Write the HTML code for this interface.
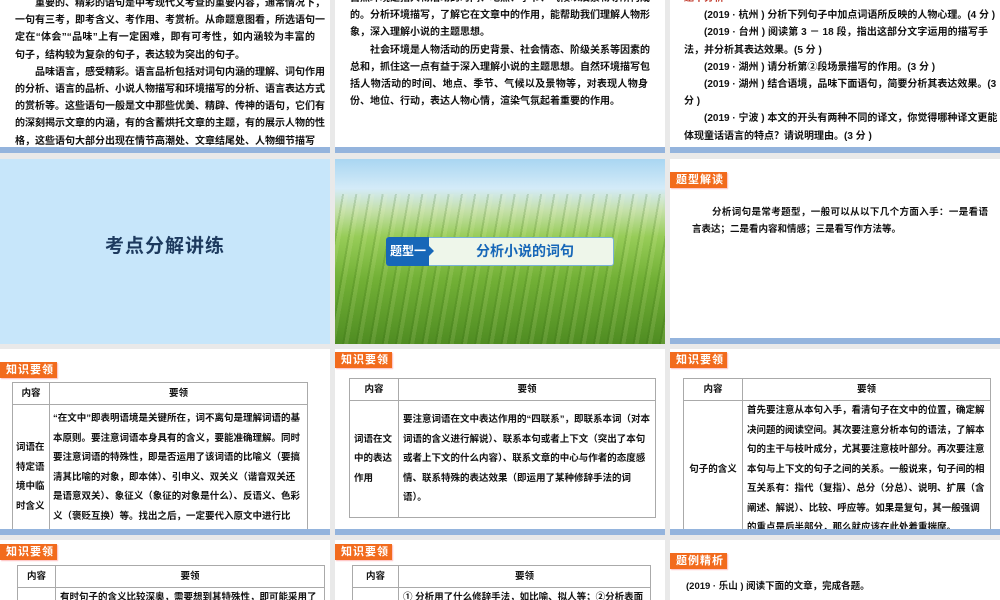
<!DOCTYPE html>
<html><head><meta charset="utf-8"><style>
*{margin:0;padding:0;box-sizing:border-box}
body{width:1000px;height:600px;background:#e9e9e9;position:relative;overflow:hidden;font-family:"Liberation Sans","Noto Sans CJK SC",sans-serif;color:#111}
.s{position:absolute;background:#fff;overflow:hidden}
.bar{position:absolute;left:0;right:0;bottom:0;height:6px;background:#94b4dd}
.t{position:absolute;font-size:10px;font-weight:bold;line-height:17.2px;letter-spacing:0}
.t div{white-space:nowrap;height:17.2px}
.t .j{text-align:justify;text-align-last:justify}
.t .i{padding-left:20px}
.lab{position:absolute;left:0;width:57px;height:16px;background:#f26b1d;color:#fff;font-size:11px;font-weight:bold;line-height:16px;padding-left:6px;letter-spacing:1px;box-shadow:1px 1px 1px #fbb}
table{position:absolute;border-collapse:collapse;font-size:9.5px;font-weight:bold;line-height:19.5px}
td{border:1px solid #aaa;vertical-align:middle;padding:0 4px}
th{border:1px solid #aaa;font-weight:bold;height:22px;text-align:center}
</style></head><body>

<!-- Row 1 -->
<div class="s" style="left:0;top:0;width:330px;height:153px">
 <div class="t" style="left:15px;top:-5px;width:300px">
  <div class="j i">重要的、精彩的语句是中考现代文考查的重要内容，通常情况下，</div>
  <div class="j">一句有三考，即考含义、考作用、考赏析。从命题意图看，所选语句一</div>
  <div class="j">定在“体会”“品味”上有一定困难，即有可考性，如内涵较为丰富的</div>
  <div>句子，结构较为复杂的句子，表达较为突出的句子。</div>
  <div class="j i">品味语言，感受精彩。语言品析包括对词句内涵的理解、词句作用</div>
  <div class="j">的分析、语言的品析、小说人物描写和环境描写的分析、语言表达方式</div>
  <div class="j">的赏析等。这些语句一般是文中那些优美、精辟、传神的语句，它们有</div>
  <div class="j">的深刻揭示文章的内涵，有的含蓄烘托文章的主题，有的展示人物的性</div>
  <div class="j">格，这些语句大部分出现在情节高潮处、文章结尾处、人物细节描写</div>
 </div>
 <div class="bar"></div>
</div>
<div class="s" style="left:335px;top:0;width:330px;height:153px">
 <div class="t" style="left:15px;top:-10px;width:298px">
  <div class="j">自然环境是指人物活动的时间、地点、季节、气候以及景物等所构成</div>
  <div class="j">的。分析环境描写，了解它在文章中的作用，能帮助我们理解人物形</div>
  <div>象，深入理解小说的主题思想。</div>
  <div class="j i">社会环境是人物活动的历史背景、社会情态、阶级关系等因素的</div>
  <div class="j">总和，抓住这一点有益于深入理解小说的主题思想。自然环境描写包</div>
  <div class="j">括人物活动的时间、地点、季节、气候以及景物等，对表现人物身</div>
  <div>份、地位、行动，表达人物心情，渲染气氛起着重要的作用。</div>
 </div>
 <div class="bar"></div>
</div>
<div class="s" style="left:670px;top:0;width:330px;height:153px">
 <div class="t" style="left:14px;top:-10px;width:304px">
  <div style="color:#c0392b">题干分析</div>
  <div class="j i">(2019 · 杭州 ) 分析下列句子中加点词语所反映的人物心理。(4 分 )</div>
  <div class="j i">(2019 · 台州 ) 阅读第 3 － 18 段，指出这部分文字运用的描写手</div>
  <div>法，并分析其表达效果。(5 分 )</div>
  <div class="i">(2019 · 湖州 ) 请分析第②段场景描写的作用。(3 分 )</div>
  <div class="j i">(2019 · 湖州 ) 结合语境，品味下面语句，简要分析其表达效果。(3</div>
  <div>分 )</div>
  <div class="j i">(2019 · 宁波 ) 本文的开头有两种不同的译文，你觉得哪种译文更能</div>
  <div>体现童话语言的特点？请说明理由。(3 分 )</div>
 </div>
 <div class="bar"></div>
</div>

<!-- Row 2 -->
<div class="s" style="left:0;top:159px;width:330px;height:185px;background:#c7e6fa">
 <div style="position:absolute;left:0;right:0;top:72px;text-align:center;font-size:19px;font-weight:bold;color:#1d3a5e;letter-spacing:1px">考点分解讲练</div>
</div>
<div class="s" style="left:335px;top:159px;width:330px;height:185px;background:linear-gradient(180deg,#a9d6f2 0%,#d4ebf8 16%,#c4e0a8 28%,#97cc58 42%,#72b036 65%,#4f8c22 100%)">
 <div style="position:absolute;inset:0;top:35px;background:repeating-linear-gradient(100deg,rgba(40,90,10,0) 0 7px,rgba(40,90,10,.16) 7px 9px,rgba(255,255,200,.1) 9px 13px)"></div>
 <div style="position:absolute;left:51px;top:78px;width:228px;height:29px;background:#eef6ea;border-radius:3px;border:1px solid #7ab3d8"></div>
 <div style="position:absolute;left:51px;top:78px;width:43px;height:29px;background:#1767b8;border-radius:3px 0 0 3px;color:#fff;font-size:12px;font-weight:bold;line-height:29px;padding-left:4px">题型一</div>
 <div style="position:absolute;left:94px;top:87px;width:0;height:0;border-top:5px solid transparent;border-bottom:5px solid transparent;border-left:5px solid #1767b8"></div>
 <div style="position:absolute;left:100px;top:78px;width:180px;line-height:29px;text-align:center;font-size:14px;font-weight:bold;color:#1767b8">分析小说的词句</div>
</div>
<div class="s" style="left:670px;top:159px;width:330px;height:185px">
 <div class="lab" style="top:13px">题型解读</div>
 <div class="t" style="left:22px;top:45px;width:296px;font-size:9.5px">
  <div class="j i">分析词句是常考题型，一般可以从以下几个方面入手：一是看语</div>
  <div>言表达；二是看内容和情感；三是看写作方法等。</div>
 </div>
 <div class="bar"></div>
</div>

<!-- Row 3 -->
<div class="s" style="left:0;top:349px;width:330px;height:186px">
 <div class="lab" style="top:13px">知识要领</div>
 <table style="left:12px;top:33px;width:296px">
  <tr><th style="width:37px">内容</th><th>要领</th></tr>
  <tr><td style="padding:0 3px">词语在特定语境中临时含义</td><td style="padding:4px 3px">“在文中”即表明语境是关键所在，词不离句是理解词语的基本原则。要注意词语本身具有的含义，要能准确理解。同时要注意词语的特殊性，即是否运用了该词语的比喻义（要搞清其比喻的对象，即本体）、引申义、双关义（谐音双关还是语意双关）、象征义（象征的对象是什么）、反语义、色彩义（褒贬互换）等。找出之后，一定要代入原文中进行比验。</td></tr>
 </table>
 <div class="bar"></div>
</div>
<div class="s" style="left:335px;top:349px;width:330px;height:186px">
 <div class="lab" style="top:3px">知识要领</div>
 <table style="left:14px;top:29px;width:307px">
  <tr><th style="width:49px">内容</th><th>要领</th></tr>
  <tr><td style="height:117px">词语在文中的表达作用</td><td>要注意词语在文中表达作用的“四联系”，即联系本词（对本词语的含义进行解说）、联系本句或者上下文（突出了本句或者上下文的什么内容）、联系文章的中心与作者的态度感情、联系特殊的表达效果（即运用了某种修辞手法的词语）。</td></tr>
 </table>
 <div class="bar"></div>
</div>
<div class="s" style="left:670px;top:349px;width:330px;height:186px">
 <div class="lab" style="top:3px">知识要领</div>
 <table style="left:13px;top:29px;width:308px">
  <tr><th style="width:59px">内容</th><th>要领</th></tr>
  <tr><td style="text-align:center">句子的含义</td><td>首先要注意从本句入手，看清句子在文中的位置，确定解决问题的阅读空间。其次要注意分析本句的语法，了解本句的主干与枝叶成分，尤其要注意枝叶部分。再次要注意本句与上下文的句子之间的关系。一般说来，句子间的相互关系有：指代（复指）、总分（分总）、说明、扩展（含阐述、解说）、比较、呼应等。如果是复句，其一般强调的重点是后半部分，那么就应该在此处着重揣摩。</td></tr>
 </table>
 <div class="bar"></div>
</div>

<!-- Row 4 -->
<div class="s" style="left:0;top:540px;width:330px;height:60px">
 <div class="lab" style="top:4px">知识要领</div>
 <table style="left:17px;top:25px;width:308px">
  <tr><th style="width:38px">内容</th><th>要领</th></tr>
  <tr><td></td><td>有时句子的含义比较深奥，需要想到其特殊性，即可能采用了</td></tr>
 </table>
</div>
<div class="s" style="left:335px;top:540px;width:330px;height:60px">
 <div class="lab" style="top:4px">知识要领</div>
 <table style="left:17px;top:25px;width:299px">
  <tr><th style="width:46px">内容</th><th>要领</th></tr>
  <tr><td></td><td>① 分析用了什么修辞手法，如比喻、拟人等；②分析表面</td></tr>
 </table>
</div>
<div class="s" style="left:670px;top:540px;width:330px;height:60px">
 <div class="lab" style="top:13px">题例精析</div>
 <div class="t" style="left:16px;top:38px;font-size:9.5px"><div>(2019 · 乐山 ) 阅读下面的文章，完成各题。</div></div>
</div>
</body></html>
